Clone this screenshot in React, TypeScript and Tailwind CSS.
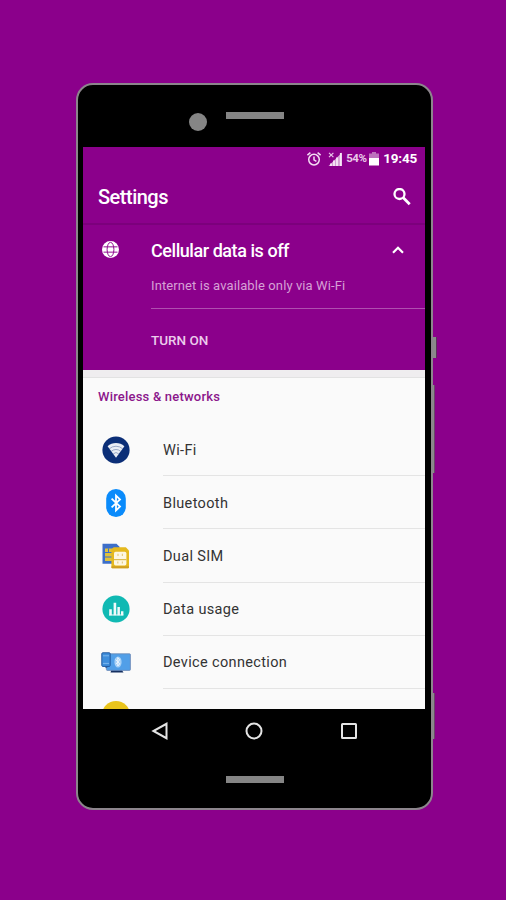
import type { ReactNode } from "react";

function WifiIcon() {
  return (
    <svg viewBox="0 0 28 28" className="h-7 w-7">
      <circle cx="14" cy="14" r="13.6" fill="#0b2e77" />
      <path d="M5.6 10.3a12.6 12.6 0 0 1 16.8 0L14 21.8z" fill="#e9edf5" />
      <path d="M7.2 12.9a10 10 0 0 1 13.6 0M9.2 15.4a7 7 0 0 1 9.6 0M11.2 17.9a4 4 0 0 1 5.6 0" fill="none" stroke="#7688b0" strokeWidth="0.7" />
    </svg>
  );
}

function BluetoothIcon() {
  return (
    <svg viewBox="0 0 28 28" className="h-7 w-7">
      <rect x="4.2" y="0" width="19.6" height="28" rx="9.8" fill="#0a8bfb" />
      <path d="M9.6 9.6l8.4 8-4 3.8V6.6l4 3.8-8.4 8" fill="none" stroke="#fff" strokeWidth="1.8" />
    </svg>
  );
}

function SimIcon() {
  return (
    <svg viewBox="0 0 28 28" className="h-7 w-7">
      <path d="M.5 1.8h14l3 3v17H.5z" fill="#3d6fc9" />
      <path d="M3 6.5h8v12.5H3z" fill="#dfc23c" />
      <path d="M3 10.5h7M3 15h7M6.5 6.5v4" stroke="#3d6fc9" strokeWidth="1" />
      <path d="M11.6 5.2h12.2l3.2 3.2v16.8a1 1 0 0 1-1 1H10.4a1 1 0 0 1-1-1V7.4z" fill="#e5b91e" />
      <path d="M9.6 24.2H27v1a1 1 0 0 1-1 1H10.4a1 1 0 0 1-1-1z" fill="#cf9f22" />
      <rect x="12" y="9.8" width="12.4" height="13.6" rx="1.6" fill="#fdf7e2" />
      <path d="M12 17.6h12.4" stroke="#dcbc52" strokeWidth="1.2" />
      <path d="M16 11.8v2.2M20.4 11.8v2.2M15.8 21.6v-2M20.4 21.6v-2" stroke="#e4cd84" strokeWidth="1.2" />
    </svg>
  );
}

function DataIcon() {
  return (
    <svg viewBox="0 0 28 28" className="h-7 w-7">
      <circle cx="14" cy="14" r="13.6" fill="#10b9b3" />
      <path d="M7.2 14.2h2.6v6H7.2zM11.6 7.8h2.6v12.4h-2.6zM15.4 12h2.5v8.2h-2.5zM19 16.2h2.4v4H19z" fill="#effafa" />
      <path d="M7 20h14.4" stroke="#effafa" strokeWidth="1" />
    </svg>
  );
}

function DeviceIcon() {
  return (
    <svg viewBox="0 0 30 28" className="h-7 w-[30px]">
      <path d="M10.5 21.6h10l2 3h-13z" fill="#152f60" />
      <rect x="5.4" y="5.8" width="24" height="16.6" rx="0.8" fill="#519fe8" stroke="#6b87b3" strokeWidth="0.8" />
      <rect x="0.8" y="4.8" width="8.4" height="13.6" rx="1" fill="#3f8fdc" stroke="#245ba0" strokeWidth="1" />
      <path d="M2 7.8h6M2 15.4h6" stroke="#8cc2f2" strokeWidth="0.8" />
      <path d="M4 18.2h4.2l-3.4 2z" fill="#245ba0" />
      <ellipse cx="17" cy="14" rx="3.6" ry="5.6" fill="#a5d0f6" />
      <path d="M14.8 11.6l4 4.2-2 2.2V9.6l2 2.2-4 4.4" fill="none" stroke="#ecf6ff" strokeWidth="1" />
    </svg>
  );
}

function MoreIcon() {
  return (
    <svg viewBox="0 0 28 28" className="h-7 w-7">
      <circle cx="14" cy="14" r="14" fill="#e9c41c" />
    </svg>
  );
}

const items: { label: string; icon: ReactNode }[] = [
  { label: "Wi-Fi", icon: <WifiIcon /> },
  { label: "Bluetooth", icon: <BluetoothIcon /> },
  { label: "Dual SIM", icon: <SimIcon /> },
  { label: "Data usage", icon: <DataIcon /> },
  { label: "Device connection", icon: <DeviceIcon /> },
];

function StatusBar() {
  return (
    <div className="flex h-6 items-center justify-end pr-2 text-white">
      <svg viewBox="0 0 16 16" className="mr-1.5 h-4 w-4" fill="none" stroke="#f3dcf3" strokeWidth="1.5">
        <circle cx="8" cy="8.6" r="5.3" />
        <path d="M1.4 4.2l3-2.5M14.6 4.2l-3-2.5M8 5.6v3.2l2.4 1.5" />
      </svg>
      <svg viewBox="0 0 14 14" className="mr-1 h-3.5 w-3.5">
        <path d="M.5 14L14 .5V14z" fill="#d49dd4" />
        <path d="M3 14v-2.5M6 14V8.5M9 14V5.5M12.8 14V1" stroke="#f7e8f7" strokeWidth="1.8" />
        <path d="M1 .8l4.4 4.4M5.4.8L1 5.2" stroke="#e7c3e7" strokeWidth="1.2" />
      </svg>
      <span className="w-[23px] text-[11.5px] font-bold leading-none tracking-[-0.5px] text-[#e9c9e9]">54%</span>
      <svg viewBox="0 0 10 14" className="h-3.5 w-2.5">
        <path d="M3 0h4v1.5h3V7H0V1.5h3z" fill="#bd73bd" />
        <path d="M0 6h10v7.5H0z" fill="#fff" />
      </svg>
      <span className="ml-1 text-[13.5px] font-bold leading-none tracking-[-0.2px]">19:45</span>
    </div>
  );
}

function Notice() {
  return (
    <section className="flex h-[147px] border-t-2 border-[#7c007c] pl-[19px] text-white">
      <svg viewBox="0 0 18 18" className="mt-4 h-[17px] w-[17px] shrink-0" fill="none" stroke="#8b008b" strokeWidth="1">
        <circle cx="9" cy="9" r="9" fill="#fff" stroke="none" />
        <ellipse cx="9" cy="9" rx="3.6" ry="7.6" />
        <path d="M1.6 6.2h14.8M1.6 11.8h14.8" />
      </svg>
      <div className="ml-8 flex-1">
        <div className="flex h-[50px] items-center justify-between pr-[21px]">
          <h2 className="pt-px text-[18px] font-medium leading-none tracking-[-0.45px]">Cellular data is off</h2>
          <svg viewBox="0 0 12 8" className="h-2 w-3" fill="none" stroke="#fff" strokeWidth="2.2">
            <path d="M1 6.7l5-5 5 5" />
          </svg>
        </div>
        <p className="h-[34px] border-b border-[#b04fb0] pt-[3px] text-[13px] leading-4 tracking-[0.1px] text-[#d6a0d6]">
          Internet is available only via Wi-Fi
        </p>
        <button className="mt-[23px] block text-[13.5px] font-medium leading-4 text-[#ebcceb]">TURN ON</button>
      </div>
    </section>
  );
}

export default function App() {
  return (
    <main className="flex h-[900px] w-[506px] items-start overflow-hidden bg-[#8b008b] pl-[76px] pt-[83px] font-['Roboto','Liberation_Sans',sans-serif]">
      <div className="flex h-[727px] w-[357px] flex-col rounded-[17px] border-2 border-[#8c858c] bg-black pl-[5px]">
        <div className="flex h-[62px] items-start pl-[106px] pt-7">
          <div className="h-[18px] w-[18px] rounded-full bg-[#858585]" />
          <div className="-mt-[1px] ml-[19px] h-[7px] w-[58px] bg-[#858585]" />
        </div>

        <div className="flex h-[562px] w-[342px] flex-col overflow-hidden bg-[#fafafa]">
          <header className="h-[76px] shrink-0 bg-[#8b008b] text-white">
            <StatusBar />
            <div className="flex h-[52px] items-center justify-between pl-[15px] pr-3.5">
              <h1 className="text-[20px] font-medium leading-none tracking-[-0.5px]">Settings</h1>
              <svg viewBox="0 0 18 18" className="h-[18px] w-[18px]" fill="none" stroke="#fff" strokeWidth="2.3">
                <circle cx="6.5" cy="6" r="5" />
                <path d="M10.3 9.8l6.4 6.4" strokeWidth="2.8" />
              </svg>
            </div>
          </header>
          <div className="shrink-0 bg-[#8b008b]">
            <Notice />
          </div>
          <div className="h-2 shrink-0 border-b border-[#e2e2e2] bg-[#efedef]" />
          <h3 className="h-[45px] shrink-0 pl-[15px] pt-[11px] text-[13px] font-medium leading-4 tracking-[0.2px] text-[#8b168b]">
            Wireless &amp; networks
          </h3>
          <ul className="shrink-0">
            {items.map((item) => (
              <li key={item.label} className="flex h-[53.2px] items-center">
                <span className="flex w-[65px] shrink-0 justify-center">{item.icon}</span>
                <span className="ml-[15px] flex h-full flex-1 items-center border-b border-[#e4e4e4] pt-[3px] text-[14.5px] tracking-[0.35px] text-[#333]">
                  {item.label}
                </span>
              </li>
            ))}
          </ul>
          <div className="flex w-[65px] shrink-0 justify-center pt-3">
            <MoreIcon />
          </div>
        </div>

        <nav className="flex h-11 items-center pl-[68px]">
          <svg viewBox="0 0 18 18" className="h-[18px] w-[18px]" fill="none" stroke="#e4e4e4" strokeWidth="2">
            <path d="M15.5 1.8v14.4L2.4 9z" />
          </svg>
          <svg viewBox="0 0 18 18" className="ml-[76px] h-[18px] w-[18px]" fill="none" stroke="#e4e4e4" strokeWidth="2">
            <circle cx="9" cy="9" r="7.5" />
          </svg>
          <svg viewBox="0 0 18 18" className="ml-[77px] h-[18px] w-[18px]" fill="none" stroke="#e4e4e4" strokeWidth="2">
            <rect x="2" y="2" width="14" height="14" rx="0.5" />
          </svg>
        </nav>
        <div className="ml-[143px] mt-[23px] h-[7px] w-[58px] bg-[#858585]" />
      </div>

      <div className="flex flex-col pt-[254px]">
        <div className="h-[21px] w-1 border-r border-[#5c305c] bg-[#8a8a8a]" />
        <div className="mt-[27px] h-[88px] w-0.5 border-r border-[#6b456b] bg-[#8a8a8a]" />
        <div className="mt-[220px] h-[46px] w-0.5 border-r border-[#6b456b] bg-[#8a8a8a]" />
      </div>
    </main>
  );
}
